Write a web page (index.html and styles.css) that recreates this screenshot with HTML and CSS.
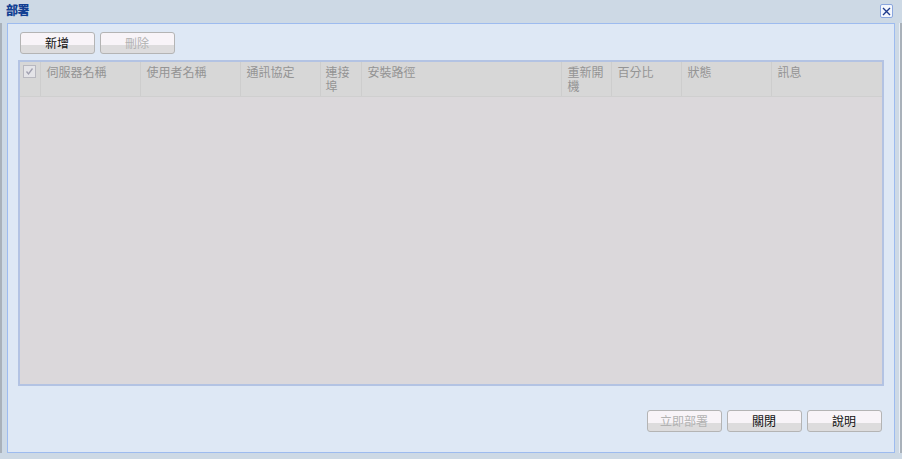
FILE: index.html
```html
<!DOCTYPE html>
<html>
<head>
<meta charset="utf-8">
<link rel="stylesheet" href="styles.css">
</head>
<body>
<div class="window">
  <div class="titlebar">
    <span class="title">部署</span>
    <button class="close" aria-label="close">
      <svg width="9" height="9" viewBox="0 0 9 9"><path d="M1 1 L8 8 M8 1 L1 8" stroke="#1e3a8c" stroke-width="1.4" fill="none"/></svg>
    </button>
  </div>
  <div class="middle">
    <div class="gutter-left"></div>
    <div class="panel">
      <div class="toolbar">
        <button class="btn">新增</button>
        <button class="btn disabled">刪除</button>
      </div>
      <div class="grid">
        <div class="grid-head">
          <div class="cell c-cb"><span class="cb"><svg width="9" height="9" viewBox="0 0 9 9"><path d="M1.5 4.5 L3.5 7 L7.5 1.5" stroke="#a0a0b0" stroke-width="1.3" fill="none"/></svg></span></div>
          <div class="cell c-server">伺服器名稱</div>
          <div class="cell c-user">使用者名稱</div>
          <div class="cell c-proto">通訊協定</div>
          <div class="cell c-port">連接埠</div>
          <div class="cell c-path">安裝路徑</div>
          <div class="cell c-reboot">重新開機</div>
          <div class="cell c-pct">百分比</div>
          <div class="cell c-state">狀態</div>
          <div class="cell c-msg">訊息</div>
        </div>
        <div class="grid-body"></div>
      </div>
      <div class="footer">
        <button class="btn disabled">立即部署</button>
        <button class="btn">關閉</button>
        <button class="btn">說明</button>
      </div>
    </div>
    <div class="gutter-right"></div>
  </div>
  <div class="bottom"></div>
</div>
</body>
</html>
```
FILE: styles.css
```css
* { box-sizing: border-box; }
html, body { margin: 0; padding: 0; }
body {
  width: 902px;
  height: 459px;
  background: #cdd9e5;
  font-family: "Noto Sans CJK TC", "Liberation Sans", sans-serif;
  font-size: 12px;
  overflow: hidden;
}
.window {
  width: 902px;
  height: 459px;
  display: flex;
  flex-direction: column;
}
.titlebar {
  height: 23px;
  display: flex;
  align-items: flex-start;
  justify-content: space-between;
  padding: 0 9px 0 6px;
}
.title {
  color: #123f92;
  font-weight: 900;
  font-size: 12px;
  line-height: 20px;
  letter-spacing: -0.5px;
}
.close {
  margin-top: 4px;
  width: 13px;
  height: 14px;
  padding: 0;
  border: 1px solid #8aa6de;
  border-radius: 2px;
  background: #f4f7fd;
  display: flex;
  align-items: center;
  justify-content: center;
}
.middle {
  display: flex;
  height: 430px;
}
.gutter-left {
  width: 7px;
  border-left: 2px solid #a9b1ba;
}
.gutter-right {
  width: 8px;
  border-right: 2px solid #a9b1ba;
  box-shadow: inset -1px 0 0 #e8eef6;
}
.panel {
  width: 888px;
  border: 1px solid #9dbbef;
  background: #dee8f5;
  display: flex;
  flex-direction: column;
  padding: 8px 12px 20px 10px;
}
.toolbar {
  display: flex;
  gap: 5px;
  padding-left: 2px;
}
.btn {
  width: 75px;
  height: 22px;
  border: 1px solid #b4b4b4;
  border-radius: 3px;
  background: linear-gradient(#f8f4f8 0, #f8f4f8 58%, #dddcdd 58%, #dddcdd 100%);
  font-family: "Noto Sans CJK TC", "Liberation Sans", sans-serif;
  font-size: 12px;
  color: #111;
  padding: 0;
  line-height: 18px;
}
.btn.disabled {
  color: #b2b2b2;
}
.grid {
  margin-top: 6px;
  width: 866px;
  height: 326px;
  border: 2px solid #b3c3e3;
  display: flex;
  flex-direction: column;
  background: #dbd8db;
}
.grid-head {
  display: flex;
  height: 35px;
  background: #d7d7d7;
  border-bottom: 1px solid #cfcfcf;
}
.cell {
  border-right: 1px solid #cdcdcd;
  color: #949494;
  padding: 3px 4px 0 6px;
  line-height: 14px;
  flex: none;
}
.c-cb { width: 21px; padding: 3px 0 0 3px; }
.c-server { width: 100px; }
.c-user { width: 100px; }
.c-proto { width: 80px; }
.c-port { width: 41px; padding-left: 5px; }
.c-path { width: 200px; }
.c-reboot { width: 50px; }
.c-pct { width: 70px; }
.c-state { width: 90px; }
.c-msg { width: 110px; border-right: none; }
.cb {
  display: flex;
  width: 13px;
  height: 13px;
  border: 1px solid #b8b8c0;
  background: #e4e4e8;
  align-items: center;
  justify-content: center;
}
.grid-body { flex: 1; }
.footer {
  margin-top: auto;
  display: flex;
  justify-content: flex-end;
  gap: 5px;
}
.bottom { flex: 1; }
```
